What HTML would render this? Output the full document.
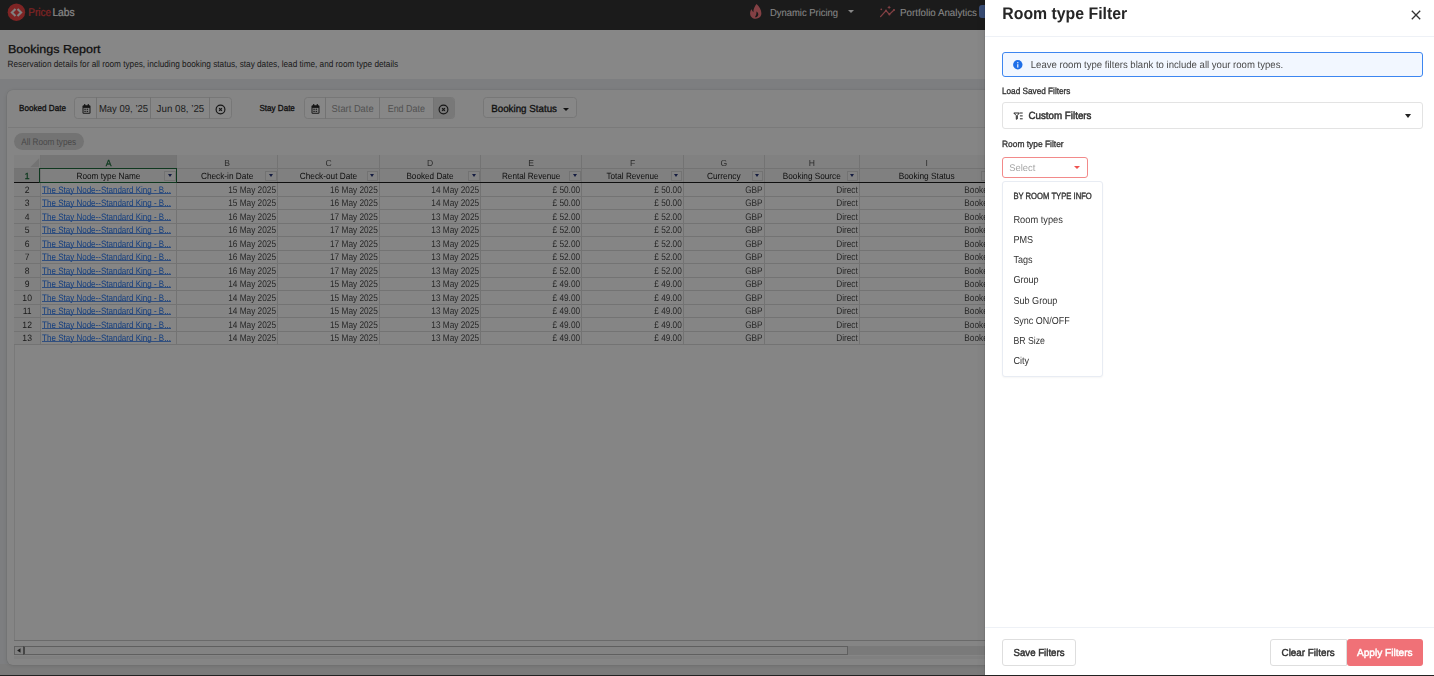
<!DOCTYPE html><html><head><meta charset="utf-8"><style>
*{box-sizing:border-box;margin:0;padding:0}
html,body{width:1434px;height:676px;overflow:hidden;background:#eceef1;font-family:"Liberation Sans",sans-serif;color:#222}
.a{position:absolute}
.t{position:absolute;white-space:nowrap;line-height:1;text-rendering:geometricPrecision}
#nav{position:absolute;left:0;top:0;width:1434px;height:30.4px;background:#333}
#hdr{position:absolute;left:0;top:30.4px;width:1434px;height:48.3px;background:#fff}
#card{position:absolute;left:7.3px;top:89.5px;width:1440px;height:575.5px;background:#fcfcfc;border-radius:6px;box-shadow:0 0 0 0.6px rgba(0,0,0,.06),0 1px 4px rgba(0,0,0,.1)}
#overlay{position:absolute;left:0;top:0;width:1434px;height:676px;background:rgba(0,0,0,.47)}
#drawer{position:absolute;left:985px;top:0;width:449px;height:676px;background:#fff;box-shadow:-1px 0 0 rgba(0,0,0,.08),-2px 0 8px rgba(0,0,0,.06)}
#botline{position:absolute;left:0;top:675px;width:1434px;height:1px;background:#222}
.hl{position:absolute;height:1px;background:#dadada}
.vl{position:absolute;width:1px;background:#dadada}
.fb{position:absolute;width:11.6px;height:10px;border:1px solid #d8d8d8;background:#f6f6f6}
.fb:after{content:"";position:absolute;left:2.6px;top:2.9px;border-left:2.7px solid transparent;border-right:2.7px solid transparent;border-top:3.1px solid #27357a}
</style></head><body>
<div id="nav"></div>
<svg class="a" style="left:7px;top:3px" width="19" height="19" viewBox="0 0 19 19"><circle cx="9.4" cy="9.15" r="8.75" fill="#ee4444"/><path d="M8.5 6.1 L4.9 9.6 L8.5 13.1 M10.5 6.1 L14.1 9.6 L10.5 13.1" stroke="#f2f2f2" stroke-width="2.1" fill="none"/></svg>
<div class="t" style="left:28.20px;top:8.952px;font-size:10.095px;color:#ee4444;-webkit-text-stroke:0.18px #ee4444;transform:scaleY(1.114);transform-origin:0 8.548px;">Price</div>
<div class="t" style="left:52.40px;top:8.858px;font-size:10.285px;color:#fff;-webkit-text-stroke:0.18px #fff;transform:scaleY(1.094);transform-origin:0 8.642px;">Labs</div>
<svg class="a" style="left:744px;top:2px" width="24" height="20" viewBox="0 0 24 20"><path d="M12.6 1.9 C15.2 4.2 17.4 7.6 17.4 11.3 C17.4 14.6 14.9 16.7 11.7 16.7 C8.5 16.7 6.1 14.5 6.1 11.4 C6.1 9.7 6.7 8.4 7.6 7.3 C8 8.6 8.6 9.6 9.4 10.3 C9.2 7.2 10.6 4.2 12.6 1.9 Z M12.4 9.6 C12.6 11.6 12.2 13.6 10.9 15.3 C12.9 15.2 14.3 14 14.3 12.4 C14.3 11.3 13.6 10.3 12.4 9.6 Z" fill="#f77a80" fill-rule="evenodd"/></svg>
<div class="t" style="left:769.90px;top:9.273px;font-size:9.455px;color:#fff;transform:scaleY(1.074);transform-origin:0 8.227px;">Dynamic Pricing</div>
<div class="a" style="left:847.6px;top:9.8px;border-left:3.5px solid transparent;border-right:3.5px solid transparent;border-top:3.5px solid #fff"></div>
<svg class="a" style="left:878.5px;top:5px" width="17" height="14" viewBox="0 0 17 14"><path d="M1.6 11.6 L7 5.6 L10.4 9.4 L15 5" stroke="#f77a80" stroke-width="1.3" fill="none" stroke-linecap="round" stroke-linejoin="round"/><circle cx="7" cy="5.6" r="1" fill="#f77a80"/><circle cx="10.4" cy="9.4" r="1" fill="#f77a80"/><circle cx="15" cy="5" r="1" fill="#f77a80"/><path d="M10.1 0.4 L10.7 1.7 L12 2.3 L10.7 2.9 L10.1 4.2 L9.5 2.9 L8.2 2.3 L9.5 1.7 Z" fill="#f77a80"/><circle cx="2.3" cy="4.3" r="0.9" fill="#f77a80"/></svg>
<div class="t" style="left:900.00px;top:9.116px;font-size:9.769px;color:#fff;transform:scaleY(1.039);transform-origin:0 8.384px;">Portfolio Analytics</div>
<div class="a" style="left:978.8px;top:5.2px;width:16px;height:13px;background:#6a90dc;border-radius:3px"></div>
<div id="hdr"></div>
<div class="t" style="left:8.00px;top:43.237px;font-size:12.526px;color:#222;-webkit-text-stroke:0.3px #222;transform:scaleY(0.920);transform-origin:0 10.263px;">Bookings Report</div>
<div class="t" style="left:7.60px;top:60.886px;font-size:8.228px;color:#333;transform:scaleY(1.117);transform-origin:0 6.614px;">Reservation details for all room types, including booking status, stay dates, lead time, and room type details</div>
<div class="a" style="left:0;top:664px;width:1434px;height:12px;background:#e9e9e9"></div>
<div id="card"></div>
<div class="t" style="left:19.00px;top:104.935px;font-size:8.130px;color:#222;-webkit-text-stroke:0.3px #222;transform:scaleY(1.080);transform-origin:0 6.565px;">Booked Date</div>
<div class="a" style="left:74.4px;top:97.3px;width:157.3px;height:21.3px;border:1px solid #e0e0e0;border-radius:3.5px;background:#fff"></div>
<div class="vl" style="left:96.2px;top:97.3px;height:21.3px"></div>
<div class="vl" style="left:149.9px;top:97.3px;height:21.3px"></div>
<div class="vl" style="left:208.9px;top:97.3px;height:21.3px"></div>
<svg class="a" style="left:81.6px;top:103.8px" width="9" height="10" viewBox="0 0 9 10"><rect x="0.5" y="1.2" width="8" height="8.6" rx="1.2" fill="#2a2a2a"/><rect x="2" y="0.1" width="1.4" height="2.4" rx=".6" fill="#2a2a2a"/><rect x="5.6" y="0.1" width="1.4" height="2.4" rx=".6" fill="#2a2a2a"/><rect x="1.5" y="3.9" width="6" height="4.9" fill="#f4f4f4"/><rect x="2.3" y="4.7" width="1.5" height="1.1" fill="#2a2a2a"/><rect x="4.6" y="4.7" width="1.5" height="1.1" fill="#2a2a2a"/><rect x="2.3" y="6.8" width="1.5" height="1.1" fill="#2a2a2a"/><rect x="4.6" y="6.8" width="1.5" height="1.1" fill="#2a2a2a"/></svg>
<div class="t" style="left:98.90px;top:105.231px;font-size:9.538px;color:#3a3a3a;transform:scaleY(1.064);transform-origin:0 8.269px;">May 09, ’25</div>
<div class="t" style="left:156.60px;top:105.125px;font-size:9.750px;color:#3a3a3a;transform:scaleY(1.041);transform-origin:0 8.375px;">Jun 08, ’25</div>
<svg class="a" style="left:215.1px;top:103.6px" width="11" height="11" viewBox="0 0 11 11"><circle cx="5.5" cy="5.5" r="4.4" stroke="#2a2a2a" stroke-width="1.15" fill="none"/><path d="M4.1 4.1 L6.9 6.9 M6.9 4.1 L4.1 6.9" stroke="#2a2a2a" stroke-width="1.2"/></svg>
<div class="t" style="left:259.40px;top:104.958px;font-size:8.085px;color:#222;-webkit-text-stroke:0.3px #222;transform:scaleY(1.086);transform-origin:0 6.542px;">Stay Date</div>
<div class="a" style="left:304px;top:97.3px;width:151px;height:21.3px;border:1px solid #e0e0e0;border-radius:3.5px;background:#fff;overflow:hidden"><div class="a" style="left:128.8px;top:0;width:22px;height:20px;background:#e2e2e2"></div></div>
<div class="vl" style="left:324.9px;top:97.3px;height:21.3px"></div>
<div class="vl" style="left:379.1px;top:97.3px;height:21.3px"></div>
<div class="vl" style="left:432.8px;top:97.3px;height:21.3px"></div>
<svg class="a" style="left:310.6px;top:103.8px" width="9" height="10" viewBox="0 0 9 10"><rect x="0.5" y="1.2" width="8" height="8.6" rx="1.2" fill="#2a2a2a"/><rect x="2" y="0.1" width="1.4" height="2.4" rx=".6" fill="#2a2a2a"/><rect x="5.6" y="0.1" width="1.4" height="2.4" rx=".6" fill="#2a2a2a"/><rect x="1.5" y="3.9" width="6" height="4.9" fill="#f4f4f4"/><rect x="2.3" y="4.7" width="1.5" height="1.1" fill="#2a2a2a"/><rect x="4.6" y="4.7" width="1.5" height="1.1" fill="#2a2a2a"/><rect x="2.3" y="6.8" width="1.5" height="1.1" fill="#2a2a2a"/><rect x="4.6" y="6.8" width="1.5" height="1.1" fill="#2a2a2a"/></svg>
<div class="t" style="left:331.60px;top:104.835px;font-size:9.330px;color:#9a9a9a;transform:scaleY(1.088);transform-origin:0 7.665px;">Start Date</div>
<div class="t" style="left:387.70px;top:105.027px;font-size:8.947px;color:#9a9a9a;transform:scaleY(1.135);transform-origin:0 7.473px;">End Date</div>
<svg class="a" style="left:438.4px;top:103.6px" width="11" height="11" viewBox="0 0 11 11"><circle cx="5.5" cy="5.5" r="4.4" stroke="#2a2a2a" stroke-width="1.15" fill="none"/><path d="M4.1 4.1 L6.9 6.9 M6.9 4.1 L4.1 6.9" stroke="#2a2a2a" stroke-width="1.2"/></svg>
<div class="a" style="left:482.6px;top:97.4px;width:94.4px;height:21px;border:1px solid #e0e0e0;border-radius:3.5px;background:#fff"></div>
<div class="t" style="left:491.20px;top:105.101px;font-size:9.797px;color:#222;-webkit-text-stroke:0.3px #222;transform:scaleY(1.036);transform-origin:0 8.399px;">Booking Status</div>
<div class="a" style="left:563px;top:107.5px;border-left:3px solid transparent;border-right:3px solid transparent;border-top:3.5px solid #222"></div>
<div class="hl" style="left:7.5px;top:127px;width:1440px;background:#e6e6e6"></div>
<div class="a" style="left:13.6px;top:133.1px;width:70.4px;height:16.8px;border-radius:8.4px;background:#d9d9d9"></div>
<div class="t" style="left:21.20px;top:138.910px;font-size:8.179px;color:#8a8a8a;transform:scaleY(1.157);transform-origin:0 6.590px;">All Room types</div>
<div class="a" style="left:0;top:0;width:1434px;height:676px;will-change:transform">
<div class="a" style="left:14.0px;top:155.3px;width:1430px;height:503.99999999999994px;background:#fcfcfc;border-left:1px solid #e4e4e4;border-top:1px solid #e4e4e4"></div>
<div class="a" style="left:14.0px;top:155.3px;width:1420.0px;height:12.699999999999989px;background:#f4f4f4"></div>
<div class="a" style="left:40.3px;top:155.3px;width:136.39999999999998px;height:12.699999999999989px;background:#dddddd"></div>
<div class="a" style="left:14.0px;top:168.0px;width:26.299999999999997px;height:176.5px;background:#f4f4f4"></div>
<div class="a" style="left:14.0px;top:168.0px;width:26.299999999999997px;height:14.5px;background:#dddddd"></div>
<div class="a" style="left:40.3px;top:168.0px;width:1393.7px;height:14.5px;background:#f2f2f2"></div>
<svg class="a" style="left:29.8px;top:157.5px" width="10" height="10" viewBox="0 0 10 10"><path d="M9.2 0.2 L9.2 9.2 L0.2 9.2 Z" fill="#d9d9d9"/></svg>
<div class="vl" style="left:39.8px;top:155.3px;height:189.2px"></div>
<div class="vl" style="left:176.2px;top:155.3px;height:189.2px"></div>
<div class="vl" style="left:277.1px;top:155.3px;height:189.2px"></div>
<div class="vl" style="left:378.9px;top:155.3px;height:189.2px"></div>
<div class="vl" style="left:480.2px;top:155.3px;height:189.2px"></div>
<div class="vl" style="left:581.2px;top:155.3px;height:189.2px"></div>
<div class="vl" style="left:682.9px;top:155.3px;height:189.2px"></div>
<div class="vl" style="left:763.7px;top:155.3px;height:189.2px"></div>
<div class="vl" style="left:858.9px;top:155.3px;height:189.2px"></div>
<div class="vl" style="left:993.5px;top:155.3px;height:189.2px"></div>
<div class="hl" style="left:14.0px;top:167.5px;width:1420.0px"></div>
<div class="hl" style="left:14.0px;top:195.5px;width:1420.0px"></div>
<div class="hl" style="left:14.0px;top:209.0px;width:1420.0px"></div>
<div class="hl" style="left:14.0px;top:222.5px;width:1420.0px"></div>
<div class="hl" style="left:14.0px;top:236.0px;width:1420.0px"></div>
<div class="hl" style="left:14.0px;top:249.5px;width:1420.0px"></div>
<div class="hl" style="left:14.0px;top:263.0px;width:1420.0px"></div>
<div class="hl" style="left:14.0px;top:276.5px;width:1420.0px"></div>
<div class="hl" style="left:14.0px;top:290.0px;width:1420.0px"></div>
<div class="hl" style="left:14.0px;top:303.5px;width:1420.0px"></div>
<div class="hl" style="left:14.0px;top:317.0px;width:1420.0px"></div>
<div class="hl" style="left:14.0px;top:330.5px;width:1420.0px"></div>
<div class="hl" style="left:14.0px;top:344.0px;width:1420.0px"></div>
<div class="a" style="left:14.0px;top:181.8px;width:1420.0px;height:1.4px;background:#1e1e1e"></div>
<div class="t" style="left:105.63px;top:159.200px;font-size:8.600px;color:#1e6e3c;-webkit-text-stroke:0.3px #1e6e3c;transform:scaleY(1.021);transform-origin:0 7.300px;">A</div>
<div class="t" style="left:224.28px;top:159.200px;font-size:8.600px;color:#555;transform:scaleY(1.021);transform-origin:0 7.300px;">B</div>
<div class="t" style="left:325.39px;top:159.200px;font-size:8.600px;color:#555;transform:scaleY(1.021);transform-origin:0 7.300px;">C</div>
<div class="t" style="left:426.94px;top:159.200px;font-size:8.600px;color:#555;transform:scaleY(1.021);transform-origin:0 7.300px;">D</div>
<div class="t" style="left:528.33px;top:159.200px;font-size:8.600px;color:#555;transform:scaleY(1.021);transform-origin:0 7.300px;">E</div>
<div class="t" style="left:629.92px;top:159.200px;font-size:8.600px;color:#555;transform:scaleY(1.021);transform-origin:0 7.300px;">F</div>
<div class="t" style="left:720.46px;top:159.200px;font-size:8.600px;color:#555;transform:scaleY(1.021);transform-origin:0 7.300px;">G</div>
<div class="t" style="left:808.69px;top:159.200px;font-size:8.600px;color:#555;transform:scaleY(1.021);transform-origin:0 7.300px;">H</div>
<div class="t" style="left:925.51px;top:159.200px;font-size:8.600px;color:#555;transform:scaleY(1.021);transform-origin:0 7.300px;">I</div>
<div class="t" style="left:24.76px;top:172.200px;font-size:8.600px;color:#1e6e3c;-webkit-text-stroke:0.3px #1e6e3c;transform:scaleY(1.037);transform-origin:0 7.300px;">1</div>
<div class="t" style="left:24.76px;top:186.200px;font-size:8.600px;color:#333;transform:scaleY(1.069);transform-origin:0 7.300px;">2</div>
<div class="t" style="left:24.76px;top:199.200px;font-size:8.600px;color:#333;transform:scaleY(1.069);transform-origin:0 7.300px;">3</div>
<div class="t" style="left:24.76px;top:213.200px;font-size:8.600px;color:#333;transform:scaleY(1.069);transform-origin:0 7.300px;">4</div>
<div class="t" style="left:24.76px;top:226.200px;font-size:8.600px;color:#333;transform:scaleY(1.069);transform-origin:0 7.300px;">5</div>
<div class="t" style="left:24.76px;top:240.200px;font-size:8.600px;color:#333;transform:scaleY(1.069);transform-origin:0 7.300px;">6</div>
<div class="t" style="left:24.76px;top:253.200px;font-size:8.600px;color:#333;transform:scaleY(1.069);transform-origin:0 7.300px;">7</div>
<div class="t" style="left:24.76px;top:267.200px;font-size:8.600px;color:#333;transform:scaleY(1.069);transform-origin:0 7.300px;">8</div>
<div class="t" style="left:24.76px;top:280.200px;font-size:8.600px;color:#333;transform:scaleY(1.069);transform-origin:0 7.300px;">9</div>
<div class="t" style="left:22.37px;top:294.200px;font-size:8.600px;color:#333;transform:scaleY(1.069);transform-origin:0 7.300px;">10</div>
<div class="t" style="left:22.69px;top:307.200px;font-size:8.600px;color:#333;transform:scaleY(1.069);transform-origin:0 7.300px;">11</div>
<div class="t" style="left:22.37px;top:321.200px;font-size:8.600px;color:#333;transform:scaleY(1.069);transform-origin:0 7.300px;">12</div>
<div class="t" style="left:22.37px;top:334.200px;font-size:8.600px;color:#333;transform:scaleY(1.069);transform-origin:0 7.300px;">13</div>
<div class="t" style="left:76.55px;top:172.893px;font-size:8.213px;color:#1a1a1a;transform:scaleY(1.102);transform-origin:0 6.607px;">Room type Name</div>
<div class="fb" style="left:164.10px;top:170.5px"></div>
<div class="t" style="left:200.95px;top:172.865px;font-size:8.271px;color:#1a1a1a;transform:scaleY(1.095);transform-origin:0 6.635px;">Check-in Date</div>
<div class="fb" style="left:265.00px;top:170.5px"></div>
<div class="t" style="left:299.75px;top:172.862px;font-size:8.277px;color:#1a1a1a;transform:scaleY(1.094);transform-origin:0 6.638px;">Check-out Date</div>
<div class="fb" style="left:366.80px;top:170.5px"></div>
<div class="t" style="left:406.40px;top:172.909px;font-size:8.181px;color:#1a1a1a;transform:scaleY(1.107);transform-origin:0 6.591px;">Booked Date</div>
<div class="fb" style="left:468.10px;top:170.5px"></div>
<div class="t" style="left:502.00px;top:172.928px;font-size:8.144px;color:#1a1a1a;transform:scaleY(1.112);transform-origin:0 6.572px;">Rental Revenue</div>
<div class="fb" style="left:569.10px;top:170.5px"></div>
<div class="t" style="left:606.45px;top:172.917px;font-size:8.166px;color:#1a1a1a;transform:scaleY(1.109);transform-origin:0 6.583px;">Total Revenue</div>
<div class="fb" style="left:670.80px;top:170.5px"></div>
<div class="t" style="left:706.90px;top:172.334px;font-size:8.332px;color:#1a1a1a;transform:scaleY(1.087);transform-origin:0 7.166px;">Currency</div>
<div class="fb" style="left:751.60px;top:170.5px"></div>
<div class="t" style="left:782.80px;top:172.892px;font-size:8.216px;color:#1a1a1a;transform:scaleY(1.102);transform-origin:0 6.608px;">Booking Source</div>
<div class="fb" style="left:846.80px;top:170.5px"></div>
<div class="t" style="left:898.70px;top:172.337px;font-size:8.326px;color:#1a1a1a;transform:scaleY(1.087);transform-origin:0 7.163px;">Booking Status</div>
<div class="fb" style="left:981.40px;top:170.5px"></div>
<div class="a" style="left:39.4px;top:167.8px;width:137.79999999999998px;height:15.7px;border:1.5px solid #1d6b3b"></div>
<div class="t" style="left:42.10px;top:186.984px;font-size:8.031px;color:#2474ee;transform:scaleY(1.161);transform-origin:0 6.516px;">The Stay Node--Standard King - B...</div>
<div class="a" style="left:42.10px;top:192.80px;width:129px;height:0.8px;background:#5d95ee"></div>
<div class="t" style="right:1158.00px;top:186.865px;font-size:8.270px;color:#4a4a4a;transform:scaleY(1.161);transform-origin:0 6.635px;">15 May 2025</div>
<div class="t" style="right:1056.20px;top:186.865px;font-size:8.270px;color:#4a4a4a;transform:scaleY(1.161);transform-origin:0 6.635px;">16 May 2025</div>
<div class="t" style="right:954.90px;top:186.865px;font-size:8.270px;color:#4a4a4a;transform:scaleY(1.161);transform-origin:0 6.635px;">14 May 2025</div>
<div class="t" style="right:853.90px;top:186.865px;font-size:8.270px;color:#4a4a4a;transform:scaleY(1.161);transform-origin:0 6.635px;">£ 50.00</div>
<div class="t" style="right:752.20px;top:186.865px;font-size:8.270px;color:#4a4a4a;transform:scaleY(1.161);transform-origin:0 6.635px;">£ 50.00</div>
<div class="t" style="right:671.40px;top:186.865px;font-size:8.270px;color:#4a4a4a;transform:scaleY(1.161);transform-origin:0 6.635px;">GBP</div>
<div class="t" style="right:576.20px;top:186.865px;font-size:8.270px;color:#4a4a4a;transform:scaleY(1.161);transform-origin:0 6.635px;">Direct</div>
<div class="t" style="right:441.60px;top:186.865px;font-size:8.270px;color:#4a4a4a;transform:scaleY(1.161);transform-origin:0 6.635px;">Booked</div>
<div class="t" style="left:42.10px;top:199.984px;font-size:8.031px;color:#2474ee;transform:scaleY(1.161);transform-origin:0 6.516px;">The Stay Node--Standard King - B...</div>
<div class="a" style="left:42.10px;top:205.80px;width:129px;height:0.8px;background:#5d95ee"></div>
<div class="t" style="right:1158.00px;top:199.865px;font-size:8.270px;color:#4a4a4a;transform:scaleY(1.161);transform-origin:0 6.635px;">15 May 2025</div>
<div class="t" style="right:1056.20px;top:199.865px;font-size:8.270px;color:#4a4a4a;transform:scaleY(1.161);transform-origin:0 6.635px;">16 May 2025</div>
<div class="t" style="right:954.90px;top:199.865px;font-size:8.270px;color:#4a4a4a;transform:scaleY(1.161);transform-origin:0 6.635px;">14 May 2025</div>
<div class="t" style="right:853.90px;top:199.865px;font-size:8.270px;color:#4a4a4a;transform:scaleY(1.161);transform-origin:0 6.635px;">£ 50.00</div>
<div class="t" style="right:752.20px;top:199.865px;font-size:8.270px;color:#4a4a4a;transform:scaleY(1.161);transform-origin:0 6.635px;">£ 50.00</div>
<div class="t" style="right:671.40px;top:199.865px;font-size:8.270px;color:#4a4a4a;transform:scaleY(1.161);transform-origin:0 6.635px;">GBP</div>
<div class="t" style="right:576.20px;top:199.865px;font-size:8.270px;color:#4a4a4a;transform:scaleY(1.161);transform-origin:0 6.635px;">Direct</div>
<div class="t" style="right:441.60px;top:199.865px;font-size:8.270px;color:#4a4a4a;transform:scaleY(1.161);transform-origin:0 6.635px;">Booked</div>
<div class="t" style="left:42.10px;top:213.984px;font-size:8.031px;color:#2474ee;transform:scaleY(1.161);transform-origin:0 6.516px;">The Stay Node--Standard King - B...</div>
<div class="a" style="left:42.10px;top:219.80px;width:129px;height:0.8px;background:#5d95ee"></div>
<div class="t" style="right:1158.00px;top:213.865px;font-size:8.270px;color:#4a4a4a;transform:scaleY(1.161);transform-origin:0 6.635px;">16 May 2025</div>
<div class="t" style="right:1056.20px;top:213.865px;font-size:8.270px;color:#4a4a4a;transform:scaleY(1.161);transform-origin:0 6.635px;">17 May 2025</div>
<div class="t" style="right:954.90px;top:213.865px;font-size:8.270px;color:#4a4a4a;transform:scaleY(1.161);transform-origin:0 6.635px;">13 May 2025</div>
<div class="t" style="right:853.90px;top:213.865px;font-size:8.270px;color:#4a4a4a;transform:scaleY(1.161);transform-origin:0 6.635px;">£ 52.00</div>
<div class="t" style="right:752.20px;top:213.865px;font-size:8.270px;color:#4a4a4a;transform:scaleY(1.161);transform-origin:0 6.635px;">£ 52.00</div>
<div class="t" style="right:671.40px;top:213.865px;font-size:8.270px;color:#4a4a4a;transform:scaleY(1.161);transform-origin:0 6.635px;">GBP</div>
<div class="t" style="right:576.20px;top:213.865px;font-size:8.270px;color:#4a4a4a;transform:scaleY(1.161);transform-origin:0 6.635px;">Direct</div>
<div class="t" style="right:441.60px;top:213.865px;font-size:8.270px;color:#4a4a4a;transform:scaleY(1.161);transform-origin:0 6.635px;">Booked</div>
<div class="t" style="left:42.10px;top:226.984px;font-size:8.031px;color:#2474ee;transform:scaleY(1.161);transform-origin:0 6.516px;">The Stay Node--Standard King - B...</div>
<div class="a" style="left:42.10px;top:232.80px;width:129px;height:0.8px;background:#5d95ee"></div>
<div class="t" style="right:1158.00px;top:226.865px;font-size:8.270px;color:#4a4a4a;transform:scaleY(1.161);transform-origin:0 6.635px;">16 May 2025</div>
<div class="t" style="right:1056.20px;top:226.865px;font-size:8.270px;color:#4a4a4a;transform:scaleY(1.161);transform-origin:0 6.635px;">17 May 2025</div>
<div class="t" style="right:954.90px;top:226.865px;font-size:8.270px;color:#4a4a4a;transform:scaleY(1.161);transform-origin:0 6.635px;">13 May 2025</div>
<div class="t" style="right:853.90px;top:226.865px;font-size:8.270px;color:#4a4a4a;transform:scaleY(1.161);transform-origin:0 6.635px;">£ 52.00</div>
<div class="t" style="right:752.20px;top:226.865px;font-size:8.270px;color:#4a4a4a;transform:scaleY(1.161);transform-origin:0 6.635px;">£ 52.00</div>
<div class="t" style="right:671.40px;top:226.865px;font-size:8.270px;color:#4a4a4a;transform:scaleY(1.161);transform-origin:0 6.635px;">GBP</div>
<div class="t" style="right:576.20px;top:226.865px;font-size:8.270px;color:#4a4a4a;transform:scaleY(1.161);transform-origin:0 6.635px;">Direct</div>
<div class="t" style="right:441.60px;top:226.865px;font-size:8.270px;color:#4a4a4a;transform:scaleY(1.161);transform-origin:0 6.635px;">Booked</div>
<div class="t" style="left:42.10px;top:240.984px;font-size:8.031px;color:#2474ee;transform:scaleY(1.161);transform-origin:0 6.516px;">The Stay Node--Standard King - B...</div>
<div class="a" style="left:42.10px;top:246.80px;width:129px;height:0.8px;background:#5d95ee"></div>
<div class="t" style="right:1158.00px;top:240.865px;font-size:8.270px;color:#4a4a4a;transform:scaleY(1.161);transform-origin:0 6.635px;">16 May 2025</div>
<div class="t" style="right:1056.20px;top:240.865px;font-size:8.270px;color:#4a4a4a;transform:scaleY(1.161);transform-origin:0 6.635px;">17 May 2025</div>
<div class="t" style="right:954.90px;top:240.865px;font-size:8.270px;color:#4a4a4a;transform:scaleY(1.161);transform-origin:0 6.635px;">13 May 2025</div>
<div class="t" style="right:853.90px;top:240.865px;font-size:8.270px;color:#4a4a4a;transform:scaleY(1.161);transform-origin:0 6.635px;">£ 52.00</div>
<div class="t" style="right:752.20px;top:240.865px;font-size:8.270px;color:#4a4a4a;transform:scaleY(1.161);transform-origin:0 6.635px;">£ 52.00</div>
<div class="t" style="right:671.40px;top:240.865px;font-size:8.270px;color:#4a4a4a;transform:scaleY(1.161);transform-origin:0 6.635px;">GBP</div>
<div class="t" style="right:576.20px;top:240.865px;font-size:8.270px;color:#4a4a4a;transform:scaleY(1.161);transform-origin:0 6.635px;">Direct</div>
<div class="t" style="right:441.60px;top:240.865px;font-size:8.270px;color:#4a4a4a;transform:scaleY(1.161);transform-origin:0 6.635px;">Booked</div>
<div class="t" style="left:42.10px;top:253.984px;font-size:8.031px;color:#2474ee;transform:scaleY(1.161);transform-origin:0 6.516px;">The Stay Node--Standard King - B...</div>
<div class="a" style="left:42.10px;top:259.80px;width:129px;height:0.8px;background:#5d95ee"></div>
<div class="t" style="right:1158.00px;top:253.865px;font-size:8.270px;color:#4a4a4a;transform:scaleY(1.161);transform-origin:0 6.635px;">16 May 2025</div>
<div class="t" style="right:1056.20px;top:253.865px;font-size:8.270px;color:#4a4a4a;transform:scaleY(1.161);transform-origin:0 6.635px;">17 May 2025</div>
<div class="t" style="right:954.90px;top:253.865px;font-size:8.270px;color:#4a4a4a;transform:scaleY(1.161);transform-origin:0 6.635px;">13 May 2025</div>
<div class="t" style="right:853.90px;top:253.865px;font-size:8.270px;color:#4a4a4a;transform:scaleY(1.161);transform-origin:0 6.635px;">£ 52.00</div>
<div class="t" style="right:752.20px;top:253.865px;font-size:8.270px;color:#4a4a4a;transform:scaleY(1.161);transform-origin:0 6.635px;">£ 52.00</div>
<div class="t" style="right:671.40px;top:253.865px;font-size:8.270px;color:#4a4a4a;transform:scaleY(1.161);transform-origin:0 6.635px;">GBP</div>
<div class="t" style="right:576.20px;top:253.865px;font-size:8.270px;color:#4a4a4a;transform:scaleY(1.161);transform-origin:0 6.635px;">Direct</div>
<div class="t" style="right:441.60px;top:253.865px;font-size:8.270px;color:#4a4a4a;transform:scaleY(1.161);transform-origin:0 6.635px;">Booked</div>
<div class="t" style="left:42.10px;top:267.984px;font-size:8.031px;color:#2474ee;transform:scaleY(1.161);transform-origin:0 6.516px;">The Stay Node--Standard King - B...</div>
<div class="a" style="left:42.10px;top:273.80px;width:129px;height:0.8px;background:#5d95ee"></div>
<div class="t" style="right:1158.00px;top:267.865px;font-size:8.270px;color:#4a4a4a;transform:scaleY(1.161);transform-origin:0 6.635px;">16 May 2025</div>
<div class="t" style="right:1056.20px;top:267.865px;font-size:8.270px;color:#4a4a4a;transform:scaleY(1.161);transform-origin:0 6.635px;">17 May 2025</div>
<div class="t" style="right:954.90px;top:267.865px;font-size:8.270px;color:#4a4a4a;transform:scaleY(1.161);transform-origin:0 6.635px;">13 May 2025</div>
<div class="t" style="right:853.90px;top:267.865px;font-size:8.270px;color:#4a4a4a;transform:scaleY(1.161);transform-origin:0 6.635px;">£ 52.00</div>
<div class="t" style="right:752.20px;top:267.865px;font-size:8.270px;color:#4a4a4a;transform:scaleY(1.161);transform-origin:0 6.635px;">£ 52.00</div>
<div class="t" style="right:671.40px;top:267.865px;font-size:8.270px;color:#4a4a4a;transform:scaleY(1.161);transform-origin:0 6.635px;">GBP</div>
<div class="t" style="right:576.20px;top:267.865px;font-size:8.270px;color:#4a4a4a;transform:scaleY(1.161);transform-origin:0 6.635px;">Direct</div>
<div class="t" style="right:441.60px;top:267.865px;font-size:8.270px;color:#4a4a4a;transform:scaleY(1.161);transform-origin:0 6.635px;">Booked</div>
<div class="t" style="left:42.10px;top:280.984px;font-size:8.031px;color:#2474ee;transform:scaleY(1.161);transform-origin:0 6.516px;">The Stay Node--Standard King - B...</div>
<div class="a" style="left:42.10px;top:286.80px;width:129px;height:0.8px;background:#5d95ee"></div>
<div class="t" style="right:1158.00px;top:280.865px;font-size:8.270px;color:#4a4a4a;transform:scaleY(1.161);transform-origin:0 6.635px;">14 May 2025</div>
<div class="t" style="right:1056.20px;top:280.865px;font-size:8.270px;color:#4a4a4a;transform:scaleY(1.161);transform-origin:0 6.635px;">15 May 2025</div>
<div class="t" style="right:954.90px;top:280.865px;font-size:8.270px;color:#4a4a4a;transform:scaleY(1.161);transform-origin:0 6.635px;">13 May 2025</div>
<div class="t" style="right:853.90px;top:280.865px;font-size:8.270px;color:#4a4a4a;transform:scaleY(1.161);transform-origin:0 6.635px;">£ 49.00</div>
<div class="t" style="right:752.20px;top:280.865px;font-size:8.270px;color:#4a4a4a;transform:scaleY(1.161);transform-origin:0 6.635px;">£ 49.00</div>
<div class="t" style="right:671.40px;top:280.865px;font-size:8.270px;color:#4a4a4a;transform:scaleY(1.161);transform-origin:0 6.635px;">GBP</div>
<div class="t" style="right:576.20px;top:280.865px;font-size:8.270px;color:#4a4a4a;transform:scaleY(1.161);transform-origin:0 6.635px;">Direct</div>
<div class="t" style="right:441.60px;top:280.865px;font-size:8.270px;color:#4a4a4a;transform:scaleY(1.161);transform-origin:0 6.635px;">Booked</div>
<div class="t" style="left:42.10px;top:294.984px;font-size:8.031px;color:#2474ee;transform:scaleY(1.161);transform-origin:0 6.516px;">The Stay Node--Standard King - B...</div>
<div class="a" style="left:42.10px;top:300.80px;width:129px;height:0.8px;background:#5d95ee"></div>
<div class="t" style="right:1158.00px;top:294.865px;font-size:8.270px;color:#4a4a4a;transform:scaleY(1.161);transform-origin:0 6.635px;">14 May 2025</div>
<div class="t" style="right:1056.20px;top:294.865px;font-size:8.270px;color:#4a4a4a;transform:scaleY(1.161);transform-origin:0 6.635px;">15 May 2025</div>
<div class="t" style="right:954.90px;top:294.865px;font-size:8.270px;color:#4a4a4a;transform:scaleY(1.161);transform-origin:0 6.635px;">13 May 2025</div>
<div class="t" style="right:853.90px;top:294.865px;font-size:8.270px;color:#4a4a4a;transform:scaleY(1.161);transform-origin:0 6.635px;">£ 49.00</div>
<div class="t" style="right:752.20px;top:294.865px;font-size:8.270px;color:#4a4a4a;transform:scaleY(1.161);transform-origin:0 6.635px;">£ 49.00</div>
<div class="t" style="right:671.40px;top:294.865px;font-size:8.270px;color:#4a4a4a;transform:scaleY(1.161);transform-origin:0 6.635px;">GBP</div>
<div class="t" style="right:576.20px;top:294.865px;font-size:8.270px;color:#4a4a4a;transform:scaleY(1.161);transform-origin:0 6.635px;">Direct</div>
<div class="t" style="right:441.60px;top:294.865px;font-size:8.270px;color:#4a4a4a;transform:scaleY(1.161);transform-origin:0 6.635px;">Booked</div>
<div class="t" style="left:42.10px;top:307.984px;font-size:8.031px;color:#2474ee;transform:scaleY(1.161);transform-origin:0 6.516px;">The Stay Node--Standard King - B...</div>
<div class="a" style="left:42.10px;top:313.80px;width:129px;height:0.8px;background:#5d95ee"></div>
<div class="t" style="right:1158.00px;top:307.865px;font-size:8.270px;color:#4a4a4a;transform:scaleY(1.161);transform-origin:0 6.635px;">14 May 2025</div>
<div class="t" style="right:1056.20px;top:307.865px;font-size:8.270px;color:#4a4a4a;transform:scaleY(1.161);transform-origin:0 6.635px;">15 May 2025</div>
<div class="t" style="right:954.90px;top:307.865px;font-size:8.270px;color:#4a4a4a;transform:scaleY(1.161);transform-origin:0 6.635px;">13 May 2025</div>
<div class="t" style="right:853.90px;top:307.865px;font-size:8.270px;color:#4a4a4a;transform:scaleY(1.161);transform-origin:0 6.635px;">£ 49.00</div>
<div class="t" style="right:752.20px;top:307.865px;font-size:8.270px;color:#4a4a4a;transform:scaleY(1.161);transform-origin:0 6.635px;">£ 49.00</div>
<div class="t" style="right:671.40px;top:307.865px;font-size:8.270px;color:#4a4a4a;transform:scaleY(1.161);transform-origin:0 6.635px;">GBP</div>
<div class="t" style="right:576.20px;top:307.865px;font-size:8.270px;color:#4a4a4a;transform:scaleY(1.161);transform-origin:0 6.635px;">Direct</div>
<div class="t" style="right:441.60px;top:307.865px;font-size:8.270px;color:#4a4a4a;transform:scaleY(1.161);transform-origin:0 6.635px;">Booked</div>
<div class="t" style="left:42.10px;top:321.984px;font-size:8.031px;color:#2474ee;transform:scaleY(1.161);transform-origin:0 6.516px;">The Stay Node--Standard King - B...</div>
<div class="a" style="left:42.10px;top:327.80px;width:129px;height:0.8px;background:#5d95ee"></div>
<div class="t" style="right:1158.00px;top:321.865px;font-size:8.270px;color:#4a4a4a;transform:scaleY(1.161);transform-origin:0 6.635px;">14 May 2025</div>
<div class="t" style="right:1056.20px;top:321.865px;font-size:8.270px;color:#4a4a4a;transform:scaleY(1.161);transform-origin:0 6.635px;">15 May 2025</div>
<div class="t" style="right:954.90px;top:321.865px;font-size:8.270px;color:#4a4a4a;transform:scaleY(1.161);transform-origin:0 6.635px;">13 May 2025</div>
<div class="t" style="right:853.90px;top:321.865px;font-size:8.270px;color:#4a4a4a;transform:scaleY(1.161);transform-origin:0 6.635px;">£ 49.00</div>
<div class="t" style="right:752.20px;top:321.865px;font-size:8.270px;color:#4a4a4a;transform:scaleY(1.161);transform-origin:0 6.635px;">£ 49.00</div>
<div class="t" style="right:671.40px;top:321.865px;font-size:8.270px;color:#4a4a4a;transform:scaleY(1.161);transform-origin:0 6.635px;">GBP</div>
<div class="t" style="right:576.20px;top:321.865px;font-size:8.270px;color:#4a4a4a;transform:scaleY(1.161);transform-origin:0 6.635px;">Direct</div>
<div class="t" style="right:441.60px;top:321.865px;font-size:8.270px;color:#4a4a4a;transform:scaleY(1.161);transform-origin:0 6.635px;">Booked</div>
<div class="t" style="left:42.10px;top:334.984px;font-size:8.031px;color:#2474ee;transform:scaleY(1.161);transform-origin:0 6.516px;">The Stay Node--Standard King - B...</div>
<div class="a" style="left:42.10px;top:340.80px;width:129px;height:0.8px;background:#5d95ee"></div>
<div class="t" style="right:1158.00px;top:334.865px;font-size:8.270px;color:#4a4a4a;transform:scaleY(1.161);transform-origin:0 6.635px;">14 May 2025</div>
<div class="t" style="right:1056.20px;top:334.865px;font-size:8.270px;color:#4a4a4a;transform:scaleY(1.161);transform-origin:0 6.635px;">15 May 2025</div>
<div class="t" style="right:954.90px;top:334.865px;font-size:8.270px;color:#4a4a4a;transform:scaleY(1.161);transform-origin:0 6.635px;">13 May 2025</div>
<div class="t" style="right:853.90px;top:334.865px;font-size:8.270px;color:#4a4a4a;transform:scaleY(1.161);transform-origin:0 6.635px;">£ 49.00</div>
<div class="t" style="right:752.20px;top:334.865px;font-size:8.270px;color:#4a4a4a;transform:scaleY(1.161);transform-origin:0 6.635px;">£ 49.00</div>
<div class="t" style="right:671.40px;top:334.865px;font-size:8.270px;color:#4a4a4a;transform:scaleY(1.161);transform-origin:0 6.635px;">GBP</div>
<div class="t" style="right:576.20px;top:334.865px;font-size:8.270px;color:#4a4a4a;transform:scaleY(1.161);transform-origin:0 6.635px;">Direct</div>
<div class="t" style="right:441.60px;top:334.865px;font-size:8.270px;color:#4a4a4a;transform:scaleY(1.161);transform-origin:0 6.635px;">Booked</div>
<div class="a" style="left:14px;top:640.8px;width:1420px;height:18.5px;background:#fbfbfb"></div>
<div class="a" style="left:14px;top:655.5px;width:1420px;height:3.8px;background:#f1f1f1"></div>
<div class="hl" style="left:14px;top:639.9px;width:1420px;background:#c9c9c9"></div>
<div class="a" style="left:14.3px;top:646.3px;width:1420px;height:9.2px;background:#e6e6e6"></div>
<div class="a" style="left:14.3px;top:646.3px;width:9.6px;height:9.2px;border:1px solid #b8b8b8;background:#f5f5f5"></div>
<svg class="a" style="left:16.8px;top:648.3px" width="5" height="6" viewBox="0 0 5 6"><path d="M3.5 0.2 L3.5 4.7 L0.1 2.45 Z" fill="#3a3a3a"/></svg>
<div class="a" style="left:23.2px;top:646.3px;width:824.5px;height:9.2px;border:1px solid #b4b4b4;border-left:2px solid #858585;background:#f7f7f7"></div>
</div>
<div id="overlay"></div>
<div class="a" style="left:0;top:0;width:1434px;height:676px;will-change:transform">
<div id="drawer"></div>
<div class="t" style="left:1002.30px;top:7.078px;font-size:15.844px;color:#262626;font-weight:bold;transform:scaleY(1.056);transform-origin:0 13.422px;">Room type Filter</div>
<svg class="a" style="left:1410.5px;top:9.6px" width="10" height="10" viewBox="0 0 10 10"><path d="M0.8 0.8 L9.2 9.2 M9.2 0.8 L0.8 9.2" stroke="#333" stroke-width="1.3"/></svg>
<div class="a" style="left:985px;top:36px;width:449px;height:1px;background:#eef1f6"></div>
<div class="a" style="left:1002px;top:52.3px;width:421px;height:24.7px;border:1px solid #3d86f0;border-radius:3px;background:#f2f7ff"></div>
<svg class="a" style="left:1012.8px;top:59.6px" width="10" height="10" viewBox="0 0 10 10"><circle cx="4.8" cy="4.8" r="4.7" fill="#1f6fe8"/><rect x="4.25" y="4.2" width="1.1" height="3.4" fill="#fff"/><rect x="4.25" y="2.1" width="1.1" height="1.2" fill="#fff"/></svg>
<div class="t" style="left:1030.80px;top:61.210px;font-size:9.581px;color:#4a4a4a;transform:scaleY(1.060);transform-origin:0 8.290px;">Leave room type filters blank to include all your room types.</div>
<div class="t" style="left:1002.00px;top:87.892px;font-size:8.216px;color:#333;-webkit-text-stroke:0.3px #333;transform:scaleY(1.102);transform-origin:0 6.608px;">Load Saved Filters</div>
<div class="a" style="left:1002px;top:102.3px;width:421px;height:26.3px;border:1px solid #e3e3e3;border-radius:3px;background:#fff"></div>
<svg class="a" style="left:1012.6px;top:111.5px" width="11" height="9" viewBox="0 0 11 9"><path d="M0.8 1 H6.2 L4.3 3.6 V6.9 L3.3 7.3 V3.6 Z" stroke="#2a2a2a" stroke-width="1" fill="none" stroke-linejoin="round"/><path d="M6.6 1 H9.7 M6.9 3.9 H9.7 M6.9 6.8 H9.7" stroke="#2a2a2a" stroke-width="1"/></svg>
<div class="t" style="left:1028.50px;top:112.112px;font-size:9.775px;color:#333;-webkit-text-stroke:0.45px #333;transform:scaleY(1.067);transform-origin:0 8.388px;">Custom Filters</div>
<div class="a" style="left:1405.2px;top:113.8px;border-left:3.6px solid transparent;border-right:3.6px solid transparent;border-top:4.2px solid #222"></div>
<div class="t" style="left:1002.00px;top:140.294px;font-size:8.412px;color:#333;-webkit-text-stroke:0.3px #333;transform:scaleY(1.076);transform-origin:0 7.206px;">Room type Filter</div>
<div class="a" style="left:1002px;top:156.5px;width:85.6px;height:21.4px;border:1px solid #f28a8a;border-radius:3px;background:#fff"></div>
<div class="t" style="left:1009.20px;top:163.286px;font-size:9.427px;color:#a8a8a8;transform:scaleY(1.033);transform-origin:0 8.214px;">Select</div>
<div class="a" style="left:1074.3px;top:166px;border-left:3.2px solid transparent;border-right:3.2px solid transparent;border-top:3.8px solid #ef5350"></div>
<div class="a" style="left:1001.8px;top:180.7px;width:101.2px;height:196.2px;border:1px solid #e8ecf3;border-radius:3px;background:#fff;box-shadow:0 1px 2px rgba(0,0,0,.04)"></div>
<div class="t" style="left:1013.40px;top:193.168px;font-size:7.664px;color:#333;-webkit-text-stroke:0.3px #333;transform:scaleY(1.181);transform-origin:0 6.332px;">BY ROOM TYPE INFO</div>
<div class="t" style="left:1013.40px;top:215.852px;font-size:9.297px;color:#333;transform:scaleY(1.092);transform-origin:0 7.648px;">Room types</div>
<div class="t" style="left:1013.40px;top:235.950px;font-size:9.100px;color:#333;transform:scaleY(1.115);transform-origin:0 7.550px;">PMS</div>
<div class="t" style="left:1013.40px;top:255.950px;font-size:9.100px;color:#333;transform:scaleY(1.115);transform-origin:0 7.550px;">Tags</div>
<div class="t" style="left:1013.40px;top:275.950px;font-size:9.100px;color:#333;transform:scaleY(1.115);transform-origin:0 7.550px;">Group</div>
<div class="t" style="left:1013.40px;top:296.950px;font-size:9.100px;color:#333;transform:scaleY(1.115);transform-origin:0 7.550px;">Sub Group</div>
<div class="t" style="left:1013.40px;top:317.016px;font-size:8.968px;color:#333;transform:scaleY(1.132);transform-origin:0 7.484px;">Sync ON/OFF</div>
<div class="t" style="left:1013.40px;top:337.126px;font-size:8.748px;color:#333;transform:scaleY(1.160);transform-origin:0 7.374px;">BR Size</div>
<div class="t" style="left:1013.40px;top:356.950px;font-size:9.100px;color:#333;transform:scaleY(1.115);transform-origin:0 7.550px;">City</div>
<div class="a" style="left:985px;top:627px;width:449px;height:1px;background:#eef1f6"></div>
<div class="a" style="left:1002.3px;top:639.4px;width:73.3px;height:26.2px;border:1px solid #dedede;border-radius:3px;background:#fff"></div>
<div class="t" style="left:1013.50px;top:649.170px;font-size:9.661px;color:#333;-webkit-text-stroke:0.45px #333;transform:scaleY(1.051);transform-origin:0 8.330px;">Save Filters</div>
<div class="a" style="left:1270.3px;top:639.3px;width:76.5px;height:26.3px;border:1px solid #dedede;border-radius:3px 0 0 3px;background:#fff"></div>
<div class="t" style="left:1281.60px;top:649.083px;font-size:9.834px;color:#333;-webkit-text-stroke:0.45px #333;transform:scaleY(1.032);transform-origin:0 8.417px;">Clear Filters</div>
<div class="a" style="left:1346.8px;top:639.3px;width:76px;height:26.3px;border-radius:3px;background:#f07177"></div>
<div class="t" style="left:1357.00px;top:648.938px;font-size:10.125px;color:#fff;-webkit-text-stroke:0.45px #fff;">Apply Filters</div>
</div>
<div id="botline"></div>
</body></html>
